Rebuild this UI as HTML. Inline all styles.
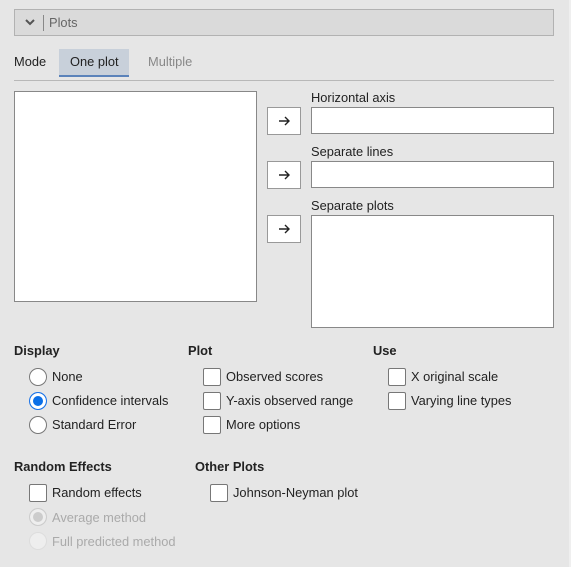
<!DOCTYPE html>
<html><head><style>
body{margin:0;width:571px;height:567px;background:#e6e6e6;font-family:"Liberation Sans",sans-serif;font-size:12.85px;color:#222;position:relative;overflow:hidden}
.a{position:absolute}
.strip{left:569px;top:0;width:2px;height:567px;background:#efefef}
.box{background:#fff;border:1px solid #888;box-sizing:border-box}
.btn{background:#fff;border:1px solid #999;box-sizing:border-box;width:34px;height:28px;display:flex;align-items:center;justify-content:center}
.h{font-weight:bold}
.rb{width:18px;height:18px;border-radius:50%;border:1px solid #777;background:#fff;box-sizing:border-box}
.cb{width:18px;height:18px;border-radius:2px;border:1px solid #777;background:#fff;box-sizing:border-box}
.lab{line-height:16px}
</style></head><body>
<div class="a strip"></div>
<div class="a" style="left:14px;top:9px;width:540px;height:27px;background:#dadada;border:1px solid #b2b2b2;box-sizing:border-box"></div>
<svg class="a" style="left:24px;top:17px" width="12" height="10"><path d="M2 3 L6 7 L10 3" stroke="#555" stroke-width="2" fill="none"/></svg>
<div class="a" style="left:43px;top:15px;width:1px;height:16px;background:#888"></div>
<div class="a lab" style="left:49px;top:15px;color:#666">Plots</div>
<div class="a lab" style="left:14px;top:54px">Mode</div>
<div class="a" style="left:59px;top:49px;width:70px;height:26px;background:#c8d0da;border-bottom:2px solid #5a82ba"></div>
<div class="a lab" style="left:70px;top:54px">One plot</div>
<div class="a lab" style="left:148px;top:54px;color:#888">Multiple</div>
<div class="a" style="left:14px;top:80px;width:540px;height:1px;background:#b8b8b8"></div>
<div class="a box" style="left:14px;top:91px;width:243px;height:211px"></div>
<svg width="0" height="0" style="position:absolute"><defs><g id="ar"><path d="M1 6 H11 M7 2 L11 6 L7 10" stroke="#222" stroke-width="1.4" fill="none"/></g></defs></svg>
<div class="a btn" style="left:267px;top:107px"><svg width="13" height="12"><use href="#ar"/></svg></div>
<div class="a btn" style="left:267px;top:161px"><svg width="13" height="12"><use href="#ar"/></svg></div>
<div class="a btn" style="left:267px;top:215px"><svg width="13" height="12"><use href="#ar"/></svg></div>
<div class="a lab" style="left:311px;top:90px">Horizontal axis</div>
<div class="a box" style="left:311px;top:107px;width:243px;height:27px"></div>
<div class="a lab" style="left:311px;top:144px">Separate lines</div>
<div class="a box" style="left:311px;top:161px;width:243px;height:27px"></div>
<div class="a lab" style="left:311px;top:198px">Separate plots</div>
<div class="a box" style="left:311px;top:215px;width:243px;height:113px"></div>

<div class="a lab h" style="left:14px;top:343px">Display</div>
<div class="a lab h" style="left:188px;top:343px">Plot</div>
<div class="a lab h" style="left:373px;top:343px">Use</div>
<div class="a rb" style="left:29px;top:368px"></div><div class="a lab" style="left:52px;top:369px">None</div>
<div class="a rb" style="left:29px;top:392px;border-color:#1a73e8;box-shadow:inset 0 0 0 3px #fff;background:#0a6fe8"></div><div class="a lab" style="left:52px;top:393px">Confidence intervals</div>
<div class="a rb" style="left:29px;top:416px"></div><div class="a lab" style="left:52px;top:417px">Standard Error</div>
<div class="a cb" style="left:203px;top:368px"></div><div class="a lab" style="left:226px;top:369px">Observed scores</div>
<div class="a cb" style="left:203px;top:392px"></div><div class="a lab" style="left:226px;top:393px">Y-axis observed range</div>
<div class="a cb" style="left:203px;top:416px"></div><div class="a lab" style="left:226px;top:417px">More options</div>
<div class="a cb" style="left:388px;top:368px"></div><div class="a lab" style="left:411px;top:369px">X original scale</div>
<div class="a cb" style="left:388px;top:392px"></div><div class="a lab" style="left:411px;top:393px">Varying line types</div>

<div class="a lab h" style="left:14px;top:459px">Random Effects</div>
<div class="a lab h" style="left:195px;top:459px">Other Plots</div>
<div class="a cb" style="left:29px;top:484px"></div><div class="a lab" style="left:52px;top:485px">Random effects</div>
<div class="a cb" style="left:210px;top:484px"></div><div class="a lab" style="left:233px;top:485px">Johnson-Neyman plot</div>
<div class="a rb" style="left:29px;top:508px;border-color:#ccc;background:#ccc;box-shadow:inset 0 0 0 3px #eee"></div><div class="a lab" style="left:52px;top:510px;color:#aaa">Average method</div>
<div class="a rb" style="left:29px;top:532px;border-color:#ddd;background:#eee"></div><div class="a lab" style="left:52px;top:534px;color:#aaa">Full predicted method</div>
</body></html>
